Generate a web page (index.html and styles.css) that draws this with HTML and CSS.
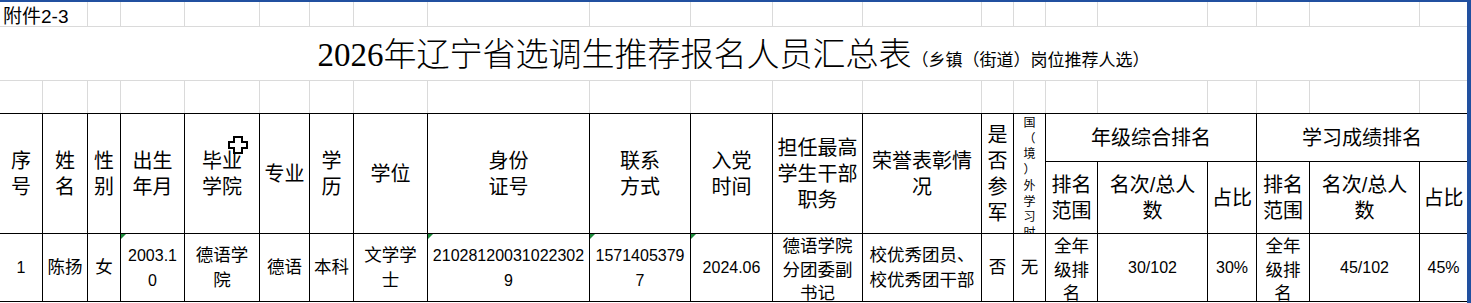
FILE: index.html
```html
<!DOCTYPE html>
<html lang="zh-CN">
<head>
<meta charset="utf-8">
<title>2026年辽宁省选调生推荐报名人员汇总表</title>
<link rel="stylesheet" href="styles.css">
</head>
<body>
<div class="page">
  <div class="main">
    <div class="top">
      <div class="tc annex">附件2-3</div>
      <div class="tc"></div><div class="tc"></div><div class="tc"></div><div class="tc"></div><div class="tc"></div>
      <div class="tc"></div><div class="tc"></div><div class="tc"></div><div class="tc"></div><div class="tc"></div>
      <div class="tc"></div><div class="tc"></div><div class="tc"></div><div class="tc"></div><div class="tc"></div>
      <div class="tc"></div><div class="tc"></div><div class="tc"></div><div class="tc"></div>
      <div class="tc title"><div class="title-line"><span class="t-main">2026年辽宁省选调生推荐报名人员汇总表</span><span class="t-sub">（乡镇（街道）岗位推荐人选）</span></div></div>
      <div class="tc"></div><div class="tc"></div><div class="tc"></div><div class="tc"></div><div class="tc"></div>
      <div class="tc"></div><div class="tc"></div><div class="tc"></div><div class="tc"></div><div class="tc"></div>
      <div class="tc"></div><div class="tc"></div><div class="tc"></div><div class="tc"></div><div class="tc"></div>
      <div class="tc"></div><div class="tc"></div><div class="tc"></div><div class="tc"></div><div class="tc"></div>
      <div class="tc"></div>
    </div>
    <div class="grid">
      <div class="cell hd span2">序<br>号</div>
      <div class="cell hd span2">姓<br>名</div>
      <div class="cell hd span2">性<br>别</div>
      <div class="cell hd span2">出生<br>年月</div>
      <div class="cell hd span2">毕业<br>学院</div>
      <div class="cell hd span2">专业</div>
      <div class="cell hd span2">学<br>历</div>
      <div class="cell hd span2">学位</div>
      <div class="cell hd span2">身份<br>证号</div>
      <div class="cell hd span2">联系<br>方式</div>
      <div class="cell hd span2">入党<br>时间</div>
      <div class="cell hd span2">担任最高<br>学生干部<br>职务</div>
      <div class="cell hd span2">荣誉表彰情<br>况</div>
      <div class="cell hd span2">是<br>否<br>参<br>军</div>
      <div class="cell span2 vert"><div class="stack">出国（境）外学习时间</div></div>
      <div class="cell hd group">年级综合排名</div>
      <div class="cell hd group">学习成绩排名</div>
      <div class="cell hd">排名<br>范围</div>
      <div class="cell hd">名次/总人<br>数</div>
      <div class="cell hd">占比</div>
      <div class="cell hd">排名<br>范围</div>
      <div class="cell hd">名次/总人<br>数</div>
      <div class="cell hd">占比</div>

      <div class="cell dt"><span class="num">1</span></div>
      <div class="cell dt">陈扬</div>
      <div class="cell dt">女</div>
      <div class="cell dt flag"><span class="num">2003.1<br>0</span></div>
      <div class="cell dt">德语学<br>院</div>
      <div class="cell dt">德语</div>
      <div class="cell dt">本科</div>
      <div class="cell dt">文学学<br>士</div>
      <div class="cell dt flag"><span class="num">21028120031022302<br>9</span></div>
      <div class="cell dt flag"><span class="num">1571405379<br>7</span></div>
      <div class="cell dt flag"><span class="num">2024.06</span></div>
      <div class="cell dt top-al">德语学院<br>分团委副<br>书记</div>
      <div class="cell dt">校优秀团员、<br>校优秀团干部</div>
      <div class="cell dt">否</div>
      <div class="cell dt">无</div>
      <div class="cell dt top-al">全年<br>级排<br>名</div>
      <div class="cell dt"><span class="num">30/102</span></div>
      <div class="cell dt"><span class="num">30%</span></div>
      <div class="cell dt top-al">全年<br>级排<br>名</div>
      <div class="cell dt"><span class="num">45/102</span></div>
      <div class="cell dt"><span class="num">45%</span></div>
    </div>
  </div>
  <div class="edge"></div>
  <svg class="cursor" width="21" height="19" viewBox="0 0 21 19" aria-hidden="true">
    <path d="M6 1 H14 V6 H19 V12 H14 V17 H6 V12 H1 V6 H6 Z" fill="#fff" stroke="#000" stroke-width="2" stroke-linejoin="miter"/>
  </svg>
</div>
</body>
</html>
```
FILE: styles.css
```css
:root {
  --cols: 42px 44px 32px 63px 74px 49px 43px 73px 161px 100px 81px 89px 118px 31px 31px 51px 109px 48px 52px 109px 47px;
  --blue: #2150a0;
}

* { box-sizing: border-box; }

body {
  margin: 0;
  background: #fff;
  color: #000;
  font-family: "Liberation Sans", "Noto Sans CJK SC", sans-serif;
  text-spacing-trim: space-all;
}

.page {
  position: relative;
  display: flex;
  width: 1471px;
  height: 303px;
  border-top: 2px solid var(--blue);
  overflow: hidden;
}

.main {
  width: 1467px;
  flex: none;
}

.edge {
  width: 4px;
  flex: none;
  background: var(--blue);
}

/* upper sheet area with light gridlines */
.top {
  display: grid;
  grid-template-columns: var(--cols);
  grid-template-rows: 24px 53px 32px;
  gap: 1px;
  background: #dadada;
}

.tc { background: #fff; }

.annex {
  grid-column: span 2;
  display: flex;
  align-items: center;
  padding-left: 3px;
  font-size: 19px;
  white-space: nowrap;
}

.title {
  grid-column: 1 / -1;
  display: flex;
  align-items: center;
  justify-content: center;
}

.title-line {
  line-height: 40px;
  white-space: nowrap;
  padding-top: 8px;
}

.t-main {
  font-family: "Liberation Serif", "Noto Sans CJK SC", serif;
  font-size: 33px;
  font-weight: 300;
}

.t-sub {
  font-size: 17px;
}

/* bordered table */
.grid {
  display: grid;
  grid-template-columns: var(--cols);
  grid-template-rows: 47px 71px 67px;
  gap: 1px;
  padding: 1px 0;
  background: #000;
}

.cell {
  position: relative;
  background: #fff;
  display: flex;
  align-items: center;
  justify-content: center;
  text-align: center;
  overflow: hidden;
  white-space: nowrap;
}

.hd {
  font-size: 20px;
  line-height: 26px;
}

.span2 { grid-row: span 2; }
.group { grid-column: span 3; }

.dt {
  font-size: 17.5px;
  line-height: 25px;
}

.num { font-size: 16px; }

.top-al {
  align-items: flex-start;
  line-height: 23.5px;
  padding-top: 1px;
}

.vert {
  align-items: flex-start;
  font-size: 12px;
  line-height: 15.7px;
}

.vert .stack {
  width: 1em;
  white-space: normal;
  word-break: break-all;
  line-break: anywhere;
  margin-top: -13.7px;
}

.flag::before {
  content: "";
  position: absolute;
  left: 0;
  top: 0;
  border-top: 5px solid #1b8a3a;
  border-right: 5px solid transparent;
}

.cursor {
  position: absolute;
  left: 228px;
  top: 134px;
}
```
